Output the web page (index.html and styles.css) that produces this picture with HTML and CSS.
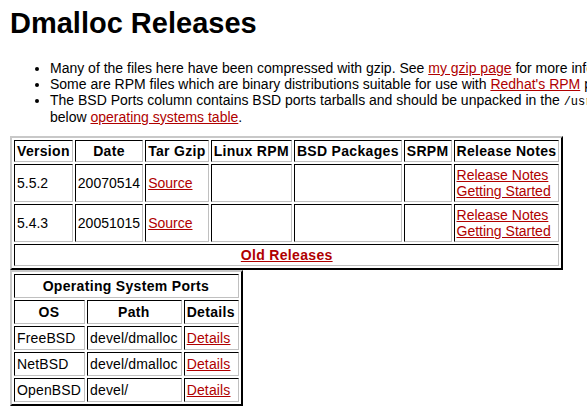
FILE: index.html
```html
<!DOCTYPE html>
<html>
<head>
<meta charset="utf-8">
<title>Dmalloc Releases</title>
<link rel="stylesheet" href="styles.css">
</head>
<body>
<h1 class="title">Dmalloc Releases</h1>
<ul class="notes">
<li>Many of the files here have been compressed with gzip. See <a href="#">my gzip page</a> for more information.</li>
<li>Some are RPM files which are binary distributions suitable for use with <a href="#">Redhat's RPM</a> package manager.</li>
<li>The BSD Ports column contains BSD ports tarballs and should be unpacked in the <code>/usr/ports</code> directory. See the below <a href="#">operating systems table</a>.</li>
</ul>
<table class="grid">
<tr><th>Version</th><th>Date</th><th>Tar Gzip</th><th>Linux RPM</th><th>BSD Packages</th><th>SRPM</th><th>Release Notes</th></tr>
<tr><td>5.5.2</td><td>20070514</td><td><a href="#">Source</a></td><td></td><td></td><td></td><td><a href="#">Release Notes</a><br><a href="#">Getting Started</a></td></tr>
<tr><td>5.4.3</td><td>20051015</td><td><a href="#">Source</a></td><td></td><td></td><td></td><td><a href="#">Release Notes</a><br><a href="#">Getting Started</a></td></tr>
<tr><td colspan="7" class="center"><a href="#" class="strong">Old Releases</a></td></tr>
</table>
<table class="grid ports">
<tr><th colspan="3">Operating System Ports</th></tr>
<tr><th>OS</th><th>Path</th><th>Details</th></tr>
<tr><td>FreeBSD</td><td>devel/dmalloc</td><td><a href="#">Details</a></td></tr>
<tr><td>NetBSD</td><td>devel/dmalloc</td><td><a href="#">Details</a></td></tr>
<tr><td>OpenBSD</td><td>devel/</td><td><a href="#">Details</a></td></tr>
</table>
</body>
</html>
```
FILE: styles.css
```css
html {
  overflow: hidden;
}
body {
  margin: 7px 10px 10px 10px;
  width: 760px;
  font-family: "Liberation Sans", Arial, sans-serif;
  font-size: 14px;
  line-height: 16px;
  color: #000;
  background: #fff;
}
.title {
  font-size: 29px;
  line-height: 33px;
  margin: 0 0 20px 0;
  font-weight: bold;
}
.notes {
  margin: 0 0 11px 0;
  padding-left: 40px;
}
a {
  color: #b00000;
}
code {
  font-family: "Liberation Mono", monospace;
  font-size: 12px;
  line-height: 14px;
}
.grid {
  border-collapse: separate;
  border-spacing: 2px;
  border-style: solid;
  border-width: 2px;
  border-color: #c8c8c8 #000 #000 #c8c8c8;
  font-size: 14px;
  white-space: nowrap;
}
.grid th, .grid td {
  border-style: solid;
  border-width: 1px;
  border-color: #000 #c0c0c0 #c0c0c0 #000;
  padding: 2px;
  line-height: 16px;
}
.ports {
  letter-spacing: 0.15px;
}
.ports th, .ports td {
  padding: 3px 3px 3px 2px;
}
.grid th {
  font-weight: bold;
  text-align: center;
  letter-spacing: 0.32px;
}
.grid td {
  text-align: left;
  vertical-align: middle;
}
.grid td.center {
  text-align: center;
}
.strong {
  font-weight: bold;
  letter-spacing: 0.32px;
}
```
